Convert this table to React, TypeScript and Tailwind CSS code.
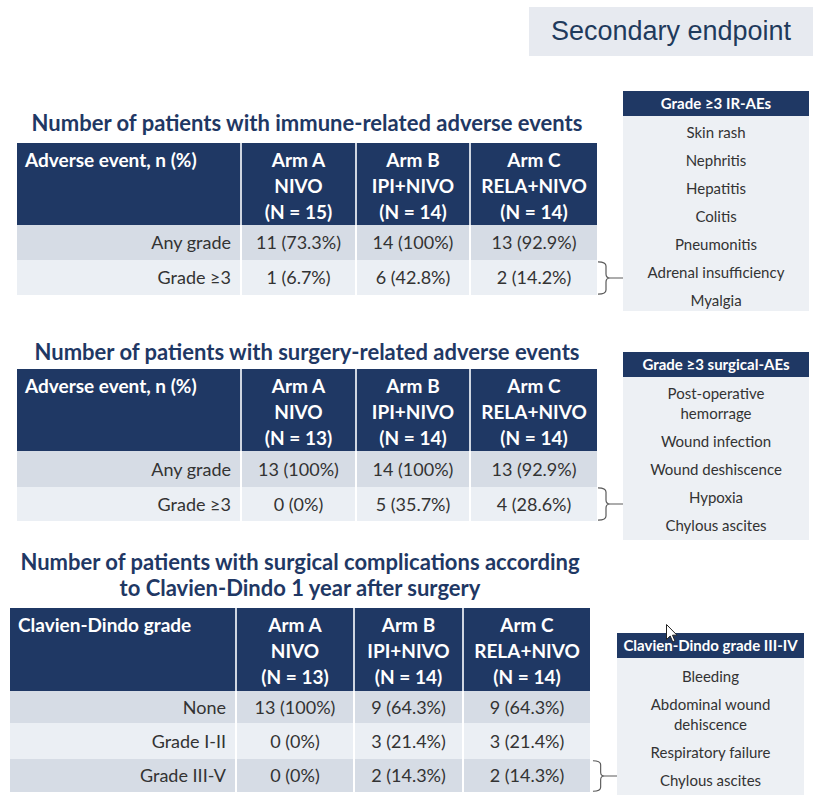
// Secondary endpoint slide: three AE tables with side lists

const NAVY = 'bg-[#1f3864]';

type Arm = [string, string, string];

type TableProps = {
    label: string;
    arms: Arm[];
    rows: string[][];
    cols: string;
    headH: string;
    rowH: string[];
    rowBg: string[];
};

// ── Data table ───────────────────────────────────────────────
function DataTable({ label, arms, rows, cols, headH, rowH, rowBg }: TableProps) {
    return (
        <div className="w-[580px]">
            <div className={`grid ${cols} ${headH} ${NAVY} text-white font-bold text-[19px] leading-[26px]`}>
                <div className="pl-[8px] pt-[4px]">{label}</div>
                {arms.map((a, i) => (
                    <div key={i} className="border-l-2 border-[#cfd6e1] pt-[4px] text-center">
                        <div>{a[0]}</div>
                        <div>{a[1]}</div>
                        <div>{a[2]}</div>
                    </div>
                ))}
            </div>
            {rows.map((r, i) => (
                <div key={i} className={`grid ${cols} ${rowH[i]} ${rowBg[i]} text-[18px] text-[#333]`}>
                    <div className="flex items-center justify-end pr-[9px]">{r[0]}</div>
                    {r.slice(1).map((v, j) => (
                        <div key={j} className="flex items-center justify-center border-l-2 border-white">
                            {v}
                        </div>
                    ))}
                </div>
            ))}
        </div>
    );
}

// ── Curly brace pointing at the side box ────────────────────
function Brace({ className = '' }: { className?: string }) {
    return (
        <svg className={className} viewBox="0 0 26 34" preserveAspectRatio="none" fill="none">
            <path
                d="M1 0.8 Q9 0.8 9 5 V13 Q9 17 13 17 Q9 17 9 21 V29 Q9 33.2 1 33.2 M13 17 H26"
                stroke="#5a5a5a"
                strokeWidth="1.2"
            />
        </svg>
    );
}

// ── Side list box ────────────────────────────────────────────
function SideBox({ title, items, className = '', bodyPad = '' }: { title: string; items: string[][]; className?: string; bodyPad?: string }) {
    return (
        <div className={className}>
            <div className={`${NAVY} h-[25px] flex items-center justify-center text-white font-bold text-[15px]`}>
                {title}
            </div>
            <div className={`bg-[#edf0f4] flex flex-col gap-[8px] text-[15px] leading-[20px] text-[#333] text-center ${bodyPad}`}>
                {items.map((it, i) => (
                    <div key={i}>
                        {it.map((line, j) => (
                            <div key={j}>{line}</div>
                        ))}
                    </div>
                ))}
            </div>
        </div>
    );
}

const DARK = 'bg-[#d6dce5]';
const LIGHT = 'bg-[#ebeff4]';

export default function App() {
    return (
        <div className="relative w-[822px] h-[808px] overflow-hidden bg-white font-['Lato','Open_Sans',sans-serif]">
            {/* Slide label */}
            <div className="flex justify-end pr-[9px] pt-[7px]">
                <div className="w-[284px] h-[49px] bg-[#e7eaf0] flex items-center justify-center font-['Liberation_Sans',Arial,sans-serif] text-[27px] text-[#1f3a5c]">
                    Secondary endpoint
                </div>
            </div>

            {/* Immune-related AEs */}
            <div className="flex items-start">
                <div className="ml-[17px] mt-[54px]">
                    <div className="w-[580px] text-center font-bold text-[22px] leading-[26px] text-[#1f3864] mb-[7px]">
                        Number of patients with immune-related adverse events
                    </div>
                    <div className="flex items-end">
                        <DataTable
                            label="Adverse event, n (%)"
                            arms={[
                                ['Arm A', 'NIVO', '(N = 15)'],
                                ['Arm B', 'IPI+NIVO', '(N = 14)'],
                                ['Arm C', 'RELA+NIVO', '(N = 14)'],
                            ]}
                            rows={[
                                ['Any grade', '11 (73.3%)', '14 (100%)', '13 (92.9%)'],
                                ['Grade ≥3', '1 (6.7%)', '6 (42.8%)', '2 (14.2%)'],
                            ]}
                            cols="grid-cols-[223px_115px_114px_128px]"
                            headH="h-[82px]"
                            rowH={['h-[35px]', 'h-[35px]']}
                            rowBg={[DARK, LIGHT]}
                        />
                        <Brace className="w-[26px] h-[34px]" />
                    </div>
                </div>
                <SideBox
                    className="w-[186px] mt-[35px]"
                    bodyPad="pt-[6px] pb-[1px]"
                    title="Grade ≥3 IR-AEs"
                    items={[['Skin rash'], ['Nephritis'], ['Hepatitis'], ['Colitis'], ['Pneumonitis'], ['Adrenal insufficiency'], ['Myalgia']]}
                />
            </div>

            {/* Surgery-related AEs */}
            <div className="flex items-start">
                <div className="ml-[17px] mt-[28px]">
                    <div className="w-[580px] text-center font-bold text-[22px] leading-[26px] text-[#1f3864] mb-[4px]">
                        Number of patients with surgery-related adverse events
                    </div>
                    <div className="flex items-end">
                        <DataTable
                            label="Adverse event, n (%)"
                            arms={[
                                ['Arm A', 'NIVO', '(N = 13)'],
                                ['Arm B', 'IPI+NIVO', '(N = 14)'],
                                ['Arm C', 'RELA+NIVO', '(N = 14)'],
                            ]}
                            rows={[
                                ['Any grade', '13 (100%)', '14 (100%)', '13 (92.9%)'],
                                ['Grade ≥3', '0 (0%)', '5 (35.7%)', '4 (28.6%)'],
                            ]}
                            cols="grid-cols-[223px_115px_114px_128px]"
                            headH="h-[82px]"
                            rowH={['h-[36px]', 'h-[34px]']}
                            rowBg={[DARK, LIGHT]}
                        />
                        <Brace className="w-[26px] h-[34px]" />
                    </div>
                </div>
                <SideBox
                    className="w-[186px] mt-[41px]"
                    bodyPad="pt-[6px] pb-[5px]"
                    title="Grade ≥3 surgical-AEs"
                    items={[['Post-operative', 'hemorrage'], ['Wound infection'], ['Wound deshiscence'], ['Hypoxia'], ['Chylous ascites']]}
                />
            </div>

            {/* Clavien-Dindo */}
            <div className="flex items-start">
                <div className="ml-[10px] mt-[9px]">
                    <div className="w-[580px] text-center font-bold text-[22px] leading-[26px] text-[#1f3864] mb-[7px]">
                        Number of patients with surgical complications according
                        <br />
                        to Clavien-Dindo 1 year after surgery
                    </div>
                    <div className="flex items-end">
                        <DataTable
                            label="Clavien-Dindo grade"
                            arms={[
                                ['Arm A', 'NIVO', '(N = 13)'],
                                ['Arm B', 'IPI+NIVO', '(N = 14)'],
                                ['Arm C', 'RELA+NIVO', '(N = 14)'],
                            ]}
                            rows={[
                                ['None', '13 (100%)', '9 (64.3%)', '9 (64.3%)'],
                                ['Grade I-II', '0 (0%)', '3 (21.4%)', '3 (21.4%)'],
                                ['Grade III-V', '0 (0%)', '2 (14.3%)', '2 (14.3%)'],
                            ]}
                            cols="grid-cols-[225px_118px_109px_128px]"
                            headH="h-[83px]"
                            rowH={['h-[32px]', 'h-[36px]', 'h-[33px]']}
                            rowBg={[DARK, LIGHT, DARK]}
                        />
                        <Brace className="ml-[2px] w-[25px] h-[32px]" />
                    </div>
                </div>
                <SideBox
                    className="w-[187px] mt-[93px]"
                    bodyPad="pt-[8px] pb-[5px]"
                    title="Clavien-Dindo grade III-IV"
                    items={[['Bleeding'], ['Abdominal wound', 'dehiscence'], ['Respiratory failure'], ['Chylous ascites']]}
                />
            </div>

            {/* Mouse pointer */}
            <svg className="absolute left-[666px] top-[624px] w-[12px] h-[19px]" viewBox="0 0 12 19">
                <path d="M0.5 0.5 V15.5 L4.2 12 L6.8 18 L9 17 L6.5 11.2 L11 11.2 Z" fill="#fff" stroke="#222" strokeWidth="1" />
            </svg>
        </div>
    );
}
